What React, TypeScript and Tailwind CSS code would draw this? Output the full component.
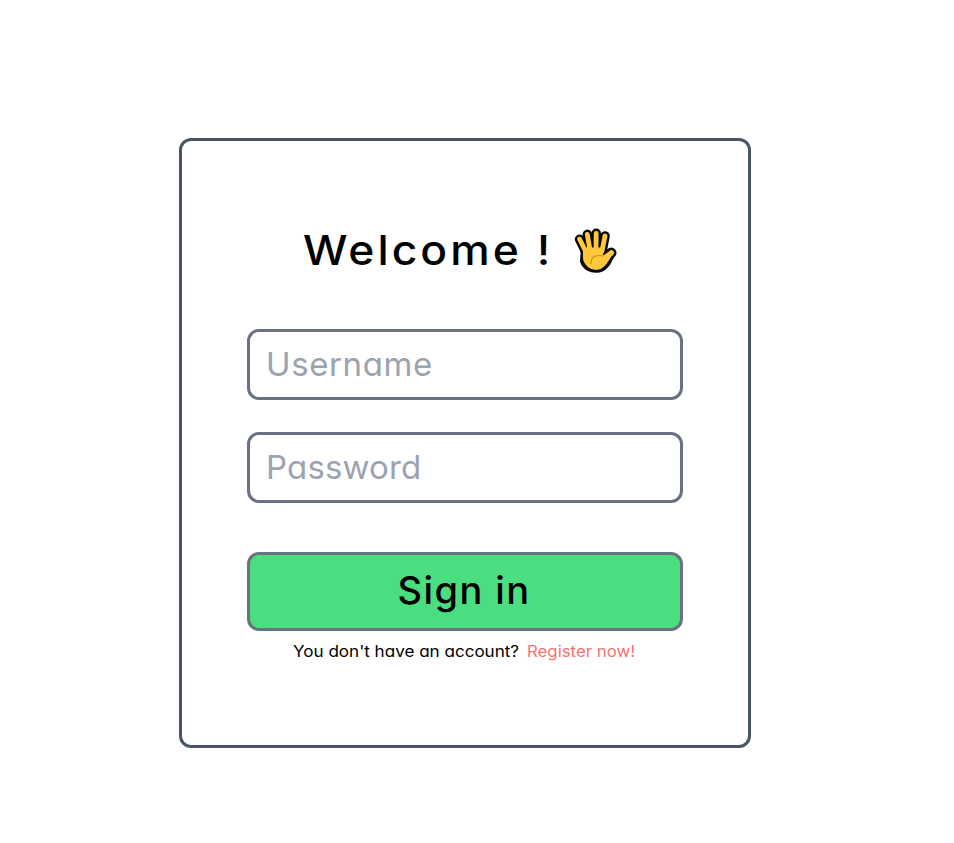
import React from "react";

function WavingHand() {
  return (
    <svg width="44" height="46" viewBox="0 0 44 46" className="ml-[40px] shrink-0" aria-hidden="true">
      <g strokeLinecap="round" strokeLinejoin="round" fill="none">
        <g stroke="#080808">
          <path d="M5.6 11.2 L12 24" strokeWidth="9.6" />
          <path d="M13.3 6.4 L16 22" strokeWidth="9.6" />
          <path d="M22.2 5.4 L22 22" strokeWidth="9.6" />
          <path d="M31 8 L28 23" strokeWidth="9.6" />
          <path d="M37.3 24.8 L30 32" strokeWidth="10.4" />
          <path d="M10 20 L30 20 L29 27 C32 26 35 22 38 24 C37 31 32 40 25 41.5 C17 43 11 39 9 33 Z" fill="#080808" strokeWidth="6" />
        </g>
        <g stroke="#FFC83D">
          <path d="M5.6 11.2 L12 24" strokeWidth="4.8" />
          <path d="M13.3 6.4 L16 22" strokeWidth="4.8" />
          <path d="M22.2 5.4 L22 22" strokeWidth="4.8" />
          <path d="M31 8 L28 23" strokeWidth="4.8" />
          <path d="M37.3 24.8 L30 32" strokeWidth="5.4" />
          <path d="M10 20 L29 20 L28.5 28 C32 27 34 23 38 24.5 C36 31 31 39.5 25 41 C17 42.5 11 38 9.5 31 Z" fill="#FFC83D" strokeWidth="1" />
        </g>
        <path d="M17 35.5 C17 28.5 22 26.5 29 28" stroke="#D68D18" strokeWidth="1.2" />
      </g>
    </svg>
  );
}

function Field({ label, type, className }: { label: string; type: string; className: string }) {
  return (
    <input
      type={type}
      placeholder={label}
      aria-label={label}
      className={`h-[71px] w-full rounded-[12px] border-[3px] border-gray-500 bg-white pb-[2px] pl-[16px] text-[33px] outline-none placeholder:text-[#9ca3af] ${className}`}
    />
  );
}

export default function App() {
  return (
    <main className="h-[843px] w-full bg-white pl-[179px] pt-[138px] font-['Inter',sans-serif] text-black [font-feature-settings:'cv11']">
      <section className="flex h-[610px] w-[572px] flex-col rounded-[12px] border-[3px] border-gray-600 px-[65px] pt-[78px]">
        <h1 className="flex h-[64px] items-center pl-[56px] text-[41px] font-medium">
          <span className="inline-block origin-left scale-x-[1.083] whitespace-nowrap tracking-[2.8px]">Welcome !</span>
          <WavingHand />
        </h1>
        <form className="mt-[46px] flex flex-col">
          <Field label="Username" type="text" className="tracking-[0.6px]" />
          <Field label="Password" type="password" className="mt-[32px] tracking-[0.15px]" />
          <button
            type="button"
            className="mt-[49px] h-[79px] rounded-[12px] border-[3px] border-gray-500 bg-[#4ade80] pb-[3px] pr-[2px] text-[38px] font-medium tracking-[1.4px]"
          >
            Sign in
          </button>
        </form>
        <p className="mt-[8px] flex h-[24px] items-center whitespace-nowrap pl-[46px] text-[16px]">
          <span className="inline-block origin-left scale-x-[1.066]">You don't have an account?</span>
          <a className="ml-[22px] inline-block origin-left scale-x-[1.05] text-[#f87171]">Register now!</a>
        </p>
      </section>
    </main>
  );
}
